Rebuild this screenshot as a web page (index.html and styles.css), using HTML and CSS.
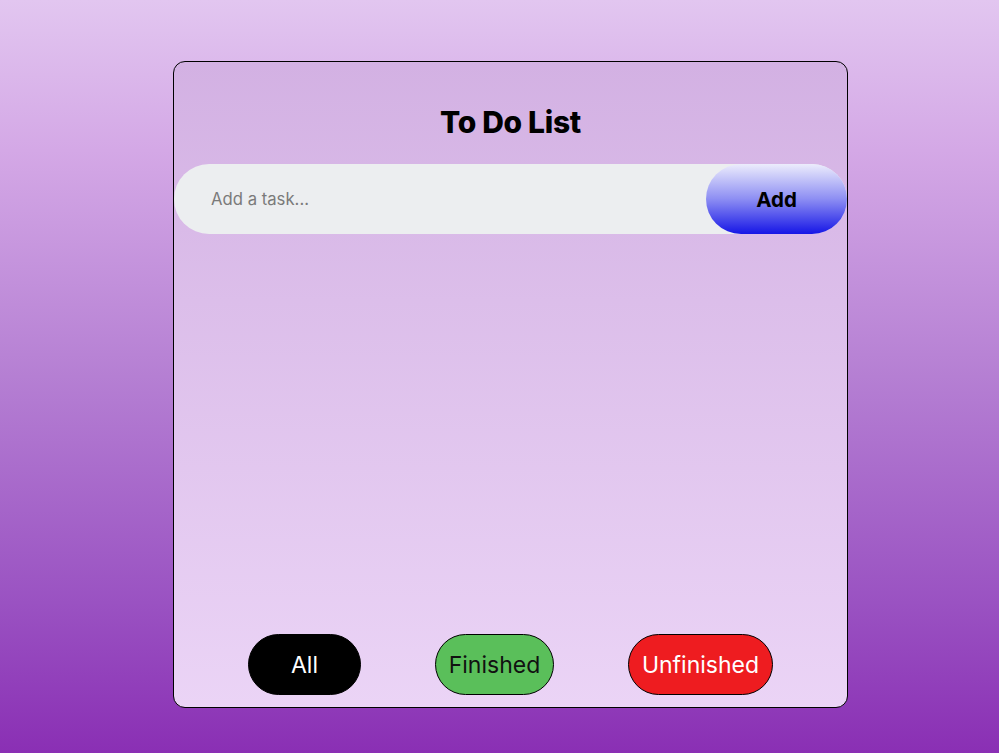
FILE: index.html
```html
<!DOCTYPE html>
<html lang="en">
<head>
<meta charset="utf-8">
<title>To Do List</title>
<link rel="stylesheet" href="styles.css">
</head>
<body>
<main class="page">
  <section class="card">
    <h1 class="title">To Do List</h1>
    <div class="entry">
      <input class="entry-input" type="text" placeholder="Add a task...">
      <button class="entry-add">Add</button>
    </div>
    <ul class="tasks"></ul>
    <div class="filters">
      <button class="filter filter-all">All</button>
      <button class="filter filter-finished">Finished</button>
      <button class="filter filter-unfinished">Unfinished</button>
    </div>
  </section>
</main>
</body>
</html>
```

FILE: styles.css
```css
* { box-sizing: border-box; }
html, body { margin: 0; height: 100%; }
body {
  font-family: "Inter", "Noto Sans", sans-serif;
  background: linear-gradient(to bottom, #e2c6f0 0%, #d4a8e6 20%, #b57fd3 50%, #9a52c2 80%, #8a2fb4 100%);
  overflow: hidden;
}
.page {
  padding: 61px 0 0 173px;
}
.card {
  width: 675px;
  height: 647px;
  border: 1px solid #000;
  border-radius: 12px;
  background: linear-gradient(to bottom, #d3b1e3, #ebd4f6);
  display: flex;
  flex-direction: column;
}
.title {
  margin: 0;
  padding-top: 41px;
  height: 102px;
  text-align: center;
  font-size: 30px;
  font-weight: 800;
  line-height: 38px;
  letter-spacing: -0.3px;
  color: #000;
}
.entry {
  display: flex;
  height: 70px;
  background: #eceef0;
  border-radius: 35px;
}
.entry-input {
  flex: 1;
  border: none;
  background: transparent;
  padding: 0 0 0 37px;
  font-family: inherit;
  font-size: 16.7px;
  color: #333;
  outline: none;
}
.entry-input::placeholder { color: #7a7a7a; }
.entry-add {
  width: 141px;
  border: none;
  border-radius: 35px;
  background: linear-gradient(to bottom, #ececfc, #8d8ef3 50%, #1616e6);
  font-family: inherit;
  font-size: 20.5px;
  font-weight: 700;
  color: #000;
}
.tasks {
  flex: 1;
  margin: 0;
  padding: 0;
  list-style: none;
}
.filters {
  display: flex;
  justify-content: space-evenly;
  padding-bottom: 12px;
}
.filter {
  height: 61px;
  border: 1px solid #000;
  border-radius: 31px;
  font-family: inherit;
  font-size: 23px;
  font-weight: 400;
  padding: 0;
}
.filter-all { width: 113px; background: #000; color: #fff; }
.filter-finished { width: 119px; background: #5abf5a; color: #111; }
.filter-unfinished { width: 145px; background: #ee1c20; color: #fff; }
```
